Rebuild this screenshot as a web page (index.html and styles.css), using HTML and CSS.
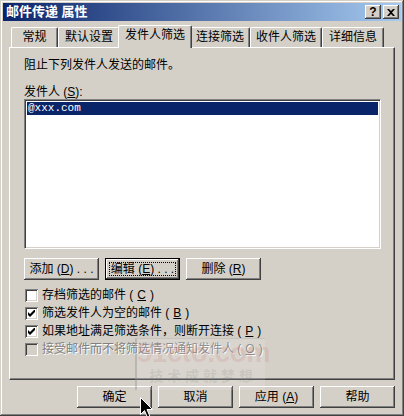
FILE: index.html
```html
<!DOCTYPE html>
<html lang="zh-CN">
<head>
    <meta charset="UTF-8">
    <title>邮件传递 属性</title>
    <link rel="stylesheet" href="styles.css">
</head>
<body>
    <div class="window">
        <div class="titlebar">
            <span class="title">邮件传递 属性</span>
            <div class="title-buttons">
                <span class="tbtn help">?</span>
                <span class="tbtn">
                    <svg width="8" height="7" viewBox="0 0 8 7"><path d="M0 0h2l2 2 2-2h2L5 3.5 8 7H6L4 5 2 7H0l3-3.5z" fill="#000"/></svg>
                </span>
            </div>
        </div>

        <div class="content">
            <div class="tabs">
                <div class="tab w47">常规</div>
                <div class="tab w62">默认设置</div>
                <div class="tab active">发件人筛选</div>
                <div class="tab w60">连接筛选</div>
                <div class="tab w72">收件人筛选</div>
                <div class="tab w62">详细信息</div>
            </div>

            <div class="panel">
                <p class="intro">阻止下列发件人发送的邮件。</p>
                <p class="field-label">发件人 (<u>S</u>):</p>
                <div class="listbox">
                    <div class="list-item selected">@xxx.com</div>
                </div>

                <div class="button-row">
                    <button class="btn">添加 (<u>D</u>) . . .</button>
                    <button class="btn focused">编辑 (<u>E</u>) . . .</button>
                    <button class="btn">删除 (<u>R</u>)</button>
                </div>

                <div class="checks">
                    <label class="check">
                        <span class="box"></span>
                        存档筛选的邮件 (<u>C</u>)
                    </label>
                    <label class="check">
                        <span class="box"><svg width="7" height="7" viewBox="0 0 7 7"><path d="M0 2v3l2 2 5-5V-1L2 4z" fill="#000"/></svg></span>
                        筛选发件人为空的邮件 (<u>B</u>)
                    </label>
                    <label class="check">
                        <span class="box"><svg width="7" height="7" viewBox="0 0 7 7"><path d="M0 2v3l2 2 5-5V-1L2 4z" fill="#000"/></svg></span>
                        如果地址满足筛选条件，则断开连接 (<u>P</u>)
                    </label>
                    <label class="check disabled">
                        <span class="box"></span>
                        接受邮件而不将筛选情况通知发件人 (<u>O</u>)
                    </label>
                </div>
            </div>

            <div class="footer">
                <button class="btn">确定</button>
                <button class="btn">取消</button>
                <button class="btn">应用 (<u>A</u>)</button>
                <button class="btn">帮助</button>
            </div>
        </div>

        <!-- watermark and mouse pointer sit on top of the dialog -->
        <div class="watermark">
            <div class="wm-logo">51cto.com</div>
            <div class="wm-sub">技 术 成 就 梦 想</div>
        </div>
        <svg class="cursor" width="13" height="21" viewBox="0 0 13 21">
            <path d="M0.5 0.5v17l4-4 3 7 2.5-1-3-7h5.5z" fill="#000" stroke="#fff" stroke-width="1"/>
        </svg>
    </div>
</body>
</html>
```

FILE: styles.css
```css
* {
    margin: 0;
    padding: 0;
    box-sizing: border-box;
}

body {
    background: #d4d0c8;
    font-family: "Liberation Sans", "Noto Sans CJK SC", sans-serif;
    font-size: 12px;
    color: #000;
}

.window {
    position: relative;
    width: 404px;
    height: 416px;
    padding: 3px;
    background: #d4d0c8;
    box-shadow: inset -1px -1px #404040, inset 1px 1px #d4d0c8,
                inset -2px -2px #808080, inset 2px 2px #fff;
    overflow: hidden;
}

.titlebar {
    height: 18px;
    display: flex;
    align-items: center;
    justify-content: space-between;
    padding: 0 2px 0 2px;
    background: linear-gradient(to right, #0a246a, #a6caf0);
}

.title {
    color: #fff;
    font-weight: bold;
    font-size: 13px;
    line-height: 18px;
    padding-left: 1px;
}

.title-buttons {
    display: flex;
    gap: 2px;
}

.tbtn {
    width: 16px;
    height: 14px;
    display: flex;
    align-items: center;
    justify-content: center;
    background: #d4d0c8;
    box-shadow: inset -1px -1px #404040, inset 1px 1px #fff,
                inset -2px -2px #808080;
}

.tbtn.help {
    font-weight: bold;
    font-size: 12px;
    line-height: 14px;
}

.content {
    padding: 4px 6px 0 6px;
}

.tabs {
    display: flex;
    align-items: flex-end;
    height: 22px;
    padding-left: 2px;
    position: relative;
    z-index: 1;
}

.tab {
    height: 20px;
    line-height: 18px;
    text-align: center;
    background: #d4d0c8;
    border-top: 1px solid #fff;
    border-left: 1px solid #fff;
    border-right: 1px solid #404040;
    border-radius: 2px 2px 0 0;
    box-shadow: inset -1px 0 #808080;
}

.w47 { width: 47px; }
.w60 { width: 60px; }
.w62 { width: 62px; }
.w72 { width: 72px; }

.tab.active {
    position: relative;
    z-index: 2;
    width: 74px;
    height: 23px;
    margin: 0 -2px -1px;
    line-height: 19px;
}

.panel {
    height: 333px;
    padding: 10px 13px 0 14px;
    border-top: 1px solid #fff;
    border-left: 1px solid #fff;
    border-right: 1px solid #404040;
    border-bottom: 1px solid #404040;
    box-shadow: inset -1px -1px #808080;
}

.intro,
.field-label {
    line-height: 14px;
    height: 14px;
}

.field-label {
    margin-top: 13px;
}

u {
    text-decoration: underline;
    text-underline-offset: 1px;
}

.listbox {
    width: 357px;
    height: 150px;
    padding: 2px;
    background: #fff;
    border: 1px solid;
    border-color: #808080 #fff #fff #808080;
    box-shadow: inset 1px 1px #404040, inset -1px -1px #d4d0c8;
}

.list-item {
    height: 13px;
    padding-left: 1px;
    font-family: "Liberation Mono", monospace;
    font-size: 11px;
    line-height: 13px;
}

.list-item.selected {
    background: #0a246a;
    color: #fff;
}

.button-row {
    display: flex;
    gap: 6px;
    margin-top: 9px;
}

.btn {
    position: relative;
    width: 75px;
    height: 22px;
    display: flex;
    align-items: center;
    justify-content: center;
    background: #d4d0c8;
    border: none;
    font: inherit;
    line-height: 14px;
    color: #000;
    box-shadow: inset -1px -1px #404040, inset 1px 1px #fff,
                inset -2px -2px #808080, inset 2px 2px #d4d0c8;
}

.btn.focused {
    box-shadow: inset 0 0 0 1px #000, inset -2px -2px #404040,
                inset 2px 2px #fff, inset -3px -3px #808080;
}

.btn.focused::after {
    content: '';
    position: absolute;
    left: 4px;
    top: 4px;
    right: 4px;
    bottom: 4px;
    border: 1px dotted #000;
}

.checks {
    margin-top: 6px;
}

.check {
    display: flex;
    align-items: center;
    gap: 4px;
    height: 18px;
    line-height: 14px;
    padding-left: 1px;
}

.box {
    width: 13px;
    height: 13px;
    display: flex;
    align-items: center;
    justify-content: center;
    background: #fff;
    box-shadow: inset 1px 1px #808080, inset -1px -1px #fff,
                inset 2px 2px #404040, inset -2px -2px #d4d0c8;
}

.check.disabled {
    color: #808080;
    text-shadow: 1px 1px #fff;
}

.check.disabled .box {
    background: #d4d0c8;
}

.footer {
    display: flex;
    justify-content: flex-end;
    gap: 6px;
    margin-top: 6px;
}

.watermark {
    position: absolute;
    left: 135px;
    top: 338px;
    width: 130px;
    height: 52px;
    background: rgba(255, 255, 255, 0.12);
    border-left: 2px solid rgba(128, 128, 128, 0.35);
    border-top: 1px solid rgba(128, 128, 128, 0.2);
    text-align: center;
}

.wm-logo {
    font-weight: bold;
    font-size: 27px;
    line-height: 28px;
    color: rgba(190, 70, 70, 0.14);
}

.wm-sub {
    font-size: 14px;
    line-height: 18px;
    color: rgba(120, 120, 120, 0.18);
    font-weight: bold;
}

.cursor {
    position: absolute;
    left: 140px;
    top: 397px;
}
```
